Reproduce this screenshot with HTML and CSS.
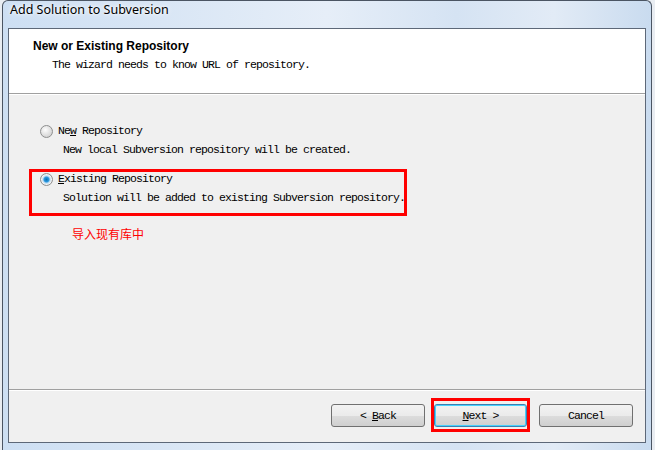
FILE: index.html
```html
<!DOCTYPE html>
<html lang="en">
<head>
<meta charset="utf-8" />
<link rel="stylesheet" href="styles.css">
</head>
<body>
<div class="window">
  <div class="titlebar">Add Solution to Subversion</div>
  <div class="client">
    <div class="header">
      <div class="header-title">New or Existing Repository</div>
      <div class="header-sub">The wizard needs to know URL of repository.</div>
    </div>
    <div class="content">
      <div class="option">
        <div class="option-row"><span class="radio"></span><span>Ne<u>w</u> Repository</span></div>
        <div class="option-desc">New local Subversion repository will be created.</div>
      </div>
      <div class="option marked">
        <div class="option-row"><span class="radio checked"></span><span><u>E</u>xisting Repository</span></div>
        <div class="option-desc">Solution will be added to existing Subversion repository.</div>
      </div>
      <div class="note">导入现有库中</div>
    </div>
    <div class="footer">
      <button class="btn back">&lt; <u>B</u>ack</button>
      <span class="mark"><button class="btn focused"><u>N</u>ext &gt;</button></span>
      <button class="btn">Cancel</button>
    </div>
  </div>
</div>
</body>
</html>
```

FILE: styles.css
```css
html {font-family: "Liberation Mono", monospace;}
body {margin: 0; background: #e9edf2; overflow: hidden;}

/* window frame */
.window {
    margin-left: 2px; width: 650px; height: 460px;
    box-sizing: border-box;
    border: 1px solid #4b5563; border-bottom: 0;
    border-radius: 6px 6px 0 0;
    padding: 0 5px;
    background: linear-gradient(90deg, #cddff3 0%, #d9e6f5 25%, #e6eef8 50%, #d5e3f3 70%, #e2ebf6 85%, #c9dbef 100%);
}
.titlebar {
    height: 27px; line-height: 27px; padding-left: 2px;
    font: 12.5px "Noto Sans", sans-serif; color: #000;
    text-shadow: 0 0 6px #fff, 0 0 3px #fff;
}
.client {
    border: 1px solid #5d6878;
    background: #f0f0f0;
    display: flex; flex-direction: column;
    height: 413px;
}

/* header */
.header {
    background: #fff; height: 65px; flex: none;
    border-bottom: 1px solid #a0a0a0;
    box-shadow: 0 1px 0 #fff;
    padding: 9px 0 0 24px; box-sizing: border-box;
}
.header-title {font: bold 12px "Liberation Sans", sans-serif; line-height: 16px;}
.header-sub {font-size: 11.5px; letter-spacing: -0.9px; line-height: 14px; margin: 4px 0 0 19px;}

/* options */
.content {flex: 1; padding: 27px 0 0 20px;}
.option {
    width: 378px; box-sizing: border-box;
    border: 3px solid transparent;
    padding: 0 0 8px 8px; margin-bottom: 1px;
    font-size: 11.5px; letter-spacing: -0.9px; white-space: nowrap;
}
.option.marked {border-color: #f00;}
.option-row {display: flex; align-items: center; gap: 5px; line-height: 14px;}
.option-desc {line-height: 14px; margin: 5px 0 0 23px;}
.radio {
    width: 13px; height: 13px; box-sizing: border-box; border-radius: 50%;
    border: 1px solid #8e8f8f;
    background: radial-gradient(circle at 40% 35%, #fdfdfd, #dcdcdc 60%, #c8c8c8);
}
.radio.checked {
    background: radial-gradient(circle, #0b6fb0 0, #2d9ae0 2.5px, #b9d9f1 3.5px, #f4f4f4 5px, #d4d4d4 6px);
}
.note {
    margin: 10px 0 0 43px;
    font: 12px "Noto Sans CJK SC", sans-serif; color: #f00; line-height: 16px;
}

/* buttons */
.footer {
    height: 53px; box-sizing: border-box; flex: none;
    border-top: 1px solid #a0a0a0;
    box-shadow: inset 0 1px 0 #fff;
    display: flex; align-items: flex-start; justify-content: flex-end;
    padding: 8px 12px 0 0;
}
.btn {
    width: 94px; height: 23px; margin-top: 6px;
    border: 1px solid #707070; border-radius: 3px;
    background: linear-gradient(#f2f2f2 0, #ebebeb 50%, #dddddd 50%, #cfcfcf 100%);
    font: 11.5px "Liberation Mono", monospace; letter-spacing: -0.9px; color: #000;
    padding: 0;
}
.btn.back {margin-right: 6px;}
.mark {border: 3px solid #f00; padding: 3px 0 2px; margin-right: 9px; display: flex;}
.mark .btn {margin-top: 0; width: 93px; border-color: #3c7fb1; box-shadow: inset 0 0 0 1px #48d1fd;}
```
